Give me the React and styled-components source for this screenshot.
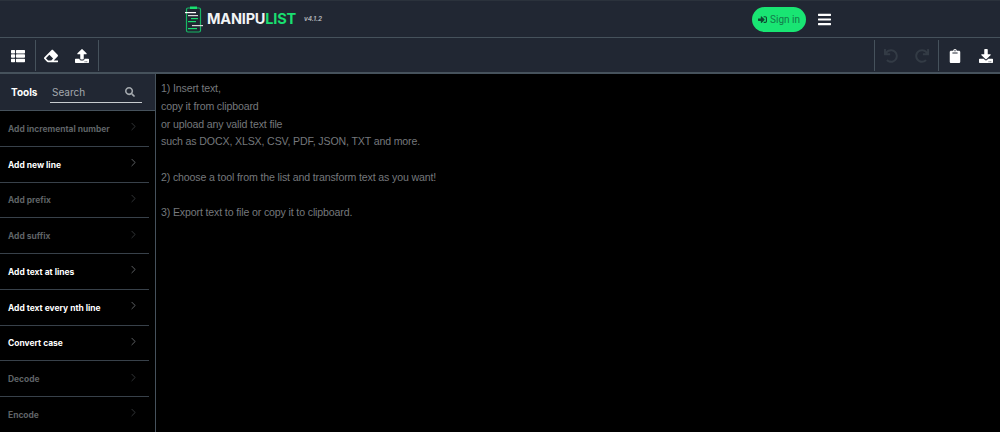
import React from "react";
import styled, { createGlobalStyle } from "styled-components";
import { FaThList, FaEraser, FaSearch, FaSignInAlt, FaBars, FaUndo, FaRedo, FaClipboard, FaDownload, FaUpload } from "react-icons/fa";
import { LuChevronRight } from "react-icons/lu";

const Global = createGlobalStyle`
  html, body { margin: 0; padding: 0; background: #000; height: 100%; overflow: hidden; }
  * { box-sizing: border-box; }
  body { font-family: Inter, "Liberation Sans", sans-serif; }
`;
const Page = styled.div`width: 1000px; height: 432px; display: flex; flex-direction: column; overflow: hidden; background: #000;`;
const Header = styled.header`
  height: 38px; flex: none; background: #212733; border-top: 1px solid #2b323c; border-bottom: 1px solid #46525c;
  display: flex; align-items: center; padding: 0 169px 0 185px;
`;
const Brand = styled.div`display: flex; align-items: center;`;
const LogoMark = styled.svg`width: 18px; height: 27px; flex: none;`;
const LogoText = styled.span`font: 700 14.5px/1 Inter, sans-serif; letter-spacing: -0.2px; color: #f2f4f5; margin-left: 4px;`;
const Green = styled.span`color: #19e070;`;
const Version = styled.span`font: italic 700 6.3px/1 Inter, sans-serif; color: #a9adb2; margin-left: 8px; margin-top: 1px;`;
const Spacer = styled.div`flex: 1;`;
const SignIn = styled.button`
  width: 54px; height: 25px; border: 0; border-radius: 13px; background: #19e573; color: #127a4a;
  display: flex; align-items: center; justify-content: center; gap: 3px; padding: 0;
  font: 400 10px Roboto, sans-serif;
  svg { width: 9px; height: 9px; color: #0f4a33; }
`;
const Burger = styled.button`
  background: none; border: 0; padding: 0; margin-left: 12px; color: #fff; display: flex;
  svg { width: 13px; height: 15px; }
`;
const Toolbar = styled.div`
  height: 36px; flex: none; background: #212733; border-bottom: 2px solid #46525c; display: flex; align-items: stretch; padding: 2px 0 1px;
`;
const Group = styled.div`
  display: flex; align-items: center;
  border-right: ${p => (p.$right ? "1px solid #46525c" : "0")};
  border-left: ${p => (p.$left ? "1px solid #46525c" : "0")};
`;
const ToolBtn = styled.button`
  background: none; border: 0; padding: 0; width: ${p => p.$w || 32}px; display: flex; align-items: center; justify-content: center;
  color: ${p => (p.$off ? "#333b45" : "#fff")};
  svg { width: 14px; height: 14px; }
`;
const Main = styled.div`flex: 1; display: flex; min-height: 0;`;
const Sidebar = styled.aside`width: 156px; flex: none; border-right: 1px solid #46525c; display: flex; flex-direction: column; overflow: hidden;`;
const ToolsHead = styled.div`
  height: 37px; flex: none; background: #212733; border-bottom: 1px solid #46525c; display: flex; align-items: center; padding: 0 13px 0 11px;
`;
const ToolsTitle = styled.span`font: 700 10px Inter, sans-serif; color: #fff; width: 39px;`;
const SearchBox = styled.div`
  flex: 1; height: 21px; display: flex; align-items: center; justify-content: space-between; border-bottom: 1px solid #c8ccd0; padding: 0 7px 0 2px;
  margin-top: 1px;
  span { font: 400 10px Inter, sans-serif; color: #a4a9ae; }
  svg { width: 10px; height: 10px; color: #a4a9ae; }
`;
const Row = styled.div`
  height: 35.75px; flex: none; margin-right: 6px; border-bottom: 1px solid #38414a; display: flex; align-items: center; justify-content: space-between;
  padding: 1px 9px 0 8px; background: #000;
  span { font: 700 8.45px Inter, sans-serif; color: ${p => (p.$on ? "#fff" : "#5f6366")}; }
  svg { width: 13px; height: 13px; stroke-width: 1.2; color: ${p => (p.$on ? "#8c9196" : "#4a4f54")}; margin-top: -4px; }
`;
const Editor = styled.div`
  flex: 1; padding: 6px 5px; font: 400 10.6px/17.75px "Liberation Sans", sans-serif; letter-spacing: -0.14px; color: #75787c; white-space: pre;
`;

const tools = [
  ["Add incremental number", false], ["Add new line", true], ["Add prefix", false], ["Add suffix", false],
  ["Add text at lines", true], ["Add text every nth line", true], ["Convert case", true], ["Decode", false], ["Encode", false],
];
const text = `1) Insert text,
copy it from clipboard
or upload any valid text file
such as DOCX, XLSX, CSV, PDF, JSON, TXT and more.

2) choose a tool from the list and transform text as you want!

3) Export text to file or copy it to clipboard.`;

export default function App() {
  return (
    <Page>
      <Global />
      <Header>
        <Brand>
          <LogoMark viewBox="0 0 18 27">
            <rect x="1.5" y="2" width="14" height="24" rx="1.5" fill="none" stroke="#17b765" strokeWidth="1.2" />
            <rect x="5" y="0.5" width="7" height="2.5" fill="#19e070" />
            <rect x="0" y="6" width="11" height="1.2" fill="#fff" />
            <rect x="3" y="9" width="10" height="1.2" fill="#d8d8d8" />
            <rect x="6" y="12" width="7" height="1.2" fill="#19e070" />
            <rect x="3" y="15" width="8" height="1.2" fill="#19e070" />
            <rect x="7" y="19" width="11" height="1.2" fill="#d8d8d8" />
            <rect x="3" y="22" width="9" height="1.2" fill="#19e070" />
          </LogoMark>
          <LogoText>MANIPU<Green>LIST</Green></LogoText>
          <Version>v4.1.2</Version>
        </Brand>
        <Spacer />
        <SignIn><FaSignInAlt />Sign in</SignIn>
        <Burger><FaBars /></Burger>
      </Header>
      <Toolbar>
        <Group $right><ToolBtn $w={35}><FaThList /></ToolBtn></Group>
        <Group $right>
          <ToolBtn $w={30}><FaEraser /></ToolBtn>
          <ToolBtn $w={32}><FaUpload /></ToolBtn>
        </Group>
        <Spacer />
        <Group $left $right>
          <ToolBtn $off $w={31}><FaUndo /></ToolBtn>
          <ToolBtn $off $w={32}><FaRedo /></ToolBtn>
        </Group>
        <Group>
          <ToolBtn><FaClipboard /></ToolBtn>
          <ToolBtn $w={29}><FaDownload /></ToolBtn>
        </Group>
      </Toolbar>
      <Main>
        <Sidebar>
          <ToolsHead>
            <ToolsTitle>Tools</ToolsTitle>
            <SearchBox><span>Search</span><FaSearch /></SearchBox>
          </ToolsHead>
          {tools.map(([n, on]) => (
            <Row key={n} $on={on}><span>{n}</span><LuChevronRight /></Row>
          ))}
        </Sidebar>
        <Editor>{text}</Editor>
      </Main>
    </Page>
  );
}
